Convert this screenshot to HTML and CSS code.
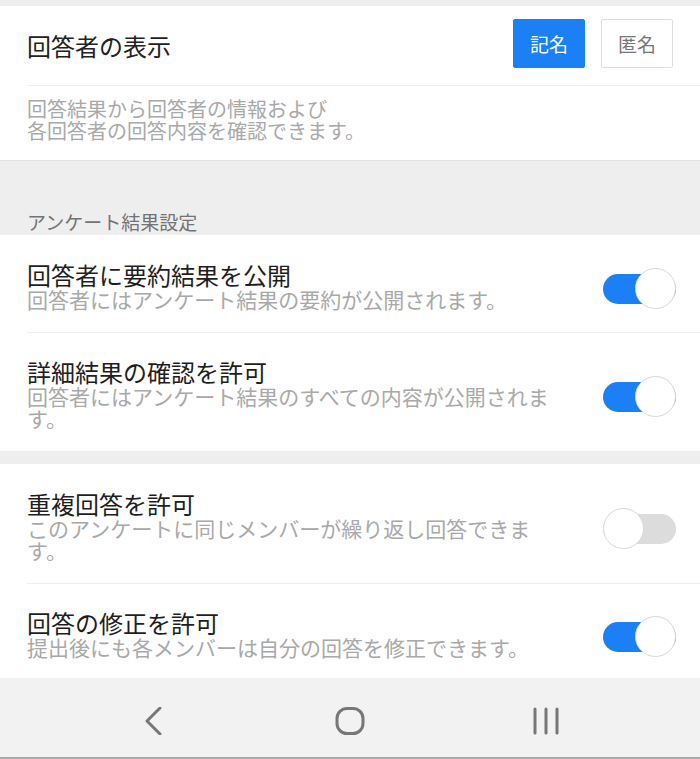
FILE: index.html
```html
<!DOCTYPE html>
<html lang="ja">
<head>
  <meta charset="UTF-8">
  <title>アンケート設定</title>
  <link rel="stylesheet" href="styles.css">
</head>
<body>
  <div class="screen">
    <div class="content">
      <div class="card card-first">
        <div class="display-row">
          <div class="display-title">回答者の表示</div>
          <div class="mode-buttons">
            <button class="mode active">記名</button>
            <button class="mode">匿名</button>
          </div>
        </div>
        <div class="display-desc">
          回答結果から回答者の情報および<br>
          各回答者の回答内容を確認できます。
        </div>
      </div>

      <div class="section-label">アンケート結果設定</div>

      <div class="card">
        <div class="row">
          <div class="row-text">
            <div class="row-title">回答者に要約結果を公開</div>
            <div class="row-desc">回答者にはアンケート結果の要約が公開されます。</div>
          </div>
          <div class="toggle on"><span class="knob"></span></div>
        </div>
        <div class="row">
          <div class="row-text">
            <div class="row-title">詳細結果の確認を許可</div>
            <div class="row-desc">回答者にはアンケート結果のすべての内容が公開されます。</div>
          </div>
          <div class="toggle on"><span class="knob"></span></div>
        </div>
      </div>

      <div class="gap"></div>

      <div class="card">
        <div class="row">
          <div class="row-text">
            <div class="row-title">重複回答を許可</div>
            <div class="row-desc">このアンケートに同じメンバーが繰り返し回答できます。</div>
          </div>
          <div class="toggle"><span class="knob"></span></div>
        </div>
        <div class="row">
          <div class="row-text">
            <div class="row-title">回答の修正を許可</div>
            <div class="row-desc">提出後にも各メンバーは自分の回答を修正できます。</div>
          </div>
          <div class="toggle on"><span class="knob"></span></div>
        </div>
      </div>
    </div>

    <div class="navbar">
      <div class="nav-item">
        <svg width="30" height="28" viewBox="0 0 30 28"><polyline points="21,1 8,14 21,27" fill="none" stroke="#777" stroke-width="3" stroke-linecap="round" stroke-linejoin="round"/></svg>
      </div>
      <div class="nav-item">
        <svg width="30" height="28" viewBox="0 0 30 28"><rect x="2" y="1.5" width="26" height="25" rx="10" fill="none" stroke="#777" stroke-width="3"/></svg>
      </div>
      <div class="nav-item">
        <svg width="30" height="28" viewBox="0 0 30 28"><path d="M4 2v24M15 2v24M26 2v24" fill="none" stroke="#777" stroke-width="3" stroke-linecap="round"/></svg>
      </div>
    </div>
  </div>
</body>
</html>
```

FILE: styles.css
```css
body {
  margin: 0;
  font-family: "Noto Sans CJK JP", "Noto Sans", sans-serif;
  background: #eeeeee;
  color: #222;
}
.screen {
  width: 700px;
  height: 759px;
  display: flex;
  flex-direction: column;
  overflow: hidden;
}
.content {
  flex: 1;
  overflow: hidden;
}
.card {
  background: #fff;
}
.card-first {
  margin-top: 6px;
  border-bottom: 1px solid #e2e2e2;
}
.display-row {
  display: flex;
  align-items: center;
  justify-content: space-between;
  padding: 13px 27px 17px 27px;
}
.display-title {
  font-size: 24px;
  line-height: 28px;
  padding-top: 4px;
}
.mode-buttons {
  display: flex;
  gap: 16px;
}
.mode {
  width: 72px;
  height: 49px;
  font-family: inherit;
  font-size: 19px;
  color: #777;
  background: #fff;
  border: 1px solid #dedede;
  border-radius: 2px;
  padding: 0;
}
.mode.active {
  background: #1b80f5;
  border-color: #1b80f5;
  color: #fff;
}
.display-desc {
  margin-left: 27px;
  border-top: 1px solid #eeeeee;
  padding: 12px 0 19px 0;
  font-size: 20px;
  line-height: 21.5px;
  color: #a9a9a9;
}
.section-label {
  padding: 50px 27px 2px 27px;
  font-size: 19px;
  line-height: 22px;
  color: #737373;
}
.gap {
  height: 13px;
}
.row {
  display: flex;
  align-items: center;
  gap: 40px;
  padding: 27px 24px 22px 27px;
  position: relative;
}
.row + .row::before {
  content: "";
  position: absolute;
  top: 0;
  left: 27px;
  right: 0;
  border-top: 1px solid #eeeeee;
}
.row-text {
  flex: 1;
}
.row-title {
  font-size: 24px;
  line-height: 26px;
  color: #1e1e1e;
}
.row-desc {
  font-size: 21px;
  line-height: 22px;
  color: #a9a9a9;
}
.toggle {
  flex: none;
  width: 73px;
  height: 30px;
  border-radius: 15px;
  background: #dcdcdc;
  position: relative;
  margin-top: 5px;
}
.toggle.on {
  background: #1b80f5;
}
.knob {
  position: absolute;
  top: -6px;
  left: 0;
  width: 39px;
  height: 39px;
  border-radius: 50%;
  background: #fff;
  border: 1.5px solid #d8d8d8;
}
.toggle.on .knob {
  left: auto;
  right: 0;
}
.navbar {
  flex: none;
  height: 50px;
  padding-top: 29px;
  background: #f2f2f2;
  border-bottom: 2px solid #a9a9a9;
  display: flex;
  justify-content: center;
}
.nav-item {
  width: 196px;
  display: flex;
  justify-content: center;
}
```
